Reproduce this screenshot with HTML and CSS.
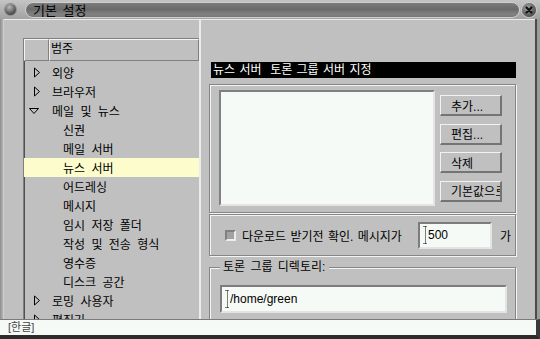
FILE: index.html
```html
<!DOCTYPE html>
<html lang="ko">
<head>
    <meta charset="UTF-8">
    <title>기본 설정</title>
    <link rel="stylesheet" href="styles.css">
</head>
<body>
    <div class="window">
        <div class="titlebar">
            <span class="tb-btn"></span>
            <div class="tb-pill"><span class="tb-title">기본 설정</span></div>
            <span class="tb-close">
                <svg width="14" height="14" viewBox="0 0 14 14">
                    <path d="M4.5 4.5 L9.5 9.5 M9.5 4.5 L4.5 9.5" stroke="#111" stroke-width="2.2" stroke-linecap="round"/>
                </svg>
            </span>
        </div>

        <div class="frame">
            <div class="edge-left"></div>
            <div class="content">
                <div class="tree-col">
                    <div class="tree-head">
                        <div class="th-cell th-blank"></div>
                        <div class="th-cell th-label">범주</div>
                    </div>
                    <ul class="tree">
                        <li><svg class="tri" width="24" height="11" viewBox="0 0 24 11"><path d="M6.5 1 L11.5 5.5 L6.5 10 Z" fill="none" stroke="#000"/></svg>외양</li>
                        <li><svg class="tri" width="24" height="11" viewBox="0 0 24 11"><path d="M6.5 1 L11.5 5.5 L6.5 10 Z" fill="none" stroke="#000"/></svg>브라우저</li>
                        <li><svg class="tri" width="24" height="11" viewBox="0 0 24 11"><path d="M1.5 3.5 L10.5 3.5 L6 8.5 Z" fill="none" stroke="#000"/></svg>메일 및 뉴스</li>
                        <li class="sub">신권</li>
                        <li class="sub">메일 서버</li>
                        <li class="sub selected">뉴스 서버</li>
                        <li class="sub">어드레싱</li>
                        <li class="sub">메시지</li>
                        <li class="sub">임시 저장 폴더</li>
                        <li class="sub">작성 및 전송 형식</li>
                        <li class="sub">영수증</li>
                        <li class="sub">디스크 공간</li>
                        <li><svg class="tri" width="24" height="11" viewBox="0 0 24 11"><path d="M6.5 1 L11.5 5.5 L6.5 10 Z" fill="none" stroke="#000"/></svg>로밍 사용자</li>
                        <li><svg class="tri" width="24" height="11" viewBox="0 0 24 11"><path d="M6.5 1 L11.5 5.5 L6.5 10 Z" fill="none" stroke="#000"/></svg>편집기</li>
                    </ul>
                </div>
                <div class="splitter"></div>
                <div class="panel">
                    <div class="panel-title">뉴스 서버  토론 그룹 서버 지정</div>

                    <div class="group servers">
                        <div class="listbox"></div>
                        <div class="btns">
                            <button>추가...</button>
                            <button>편집...</button>
                            <button>삭제</button>
                            <button>기본값으로</button>
                        </div>
                    </div>

                    <div class="group confirm">
                        <span class="check"></span>
                        <label class="check-label">다운로드 받기전 확인. 메시지가</label>
                        <div class="entry small">
                            <svg class="caret" width="5" height="20" viewBox="0 0 5 20"><path d="M0.5 1.5 H4.5 M2.5 1.5 V18.5 M0.5 18.5 H4.5" stroke="#000" stroke-dasharray="1 1"/></svg>500
                        </div>
                        <span class="unit">가</span>
                    </div>

                    <fieldset class="group dirs">
                        <legend>토론 그룹 디렉토리:</legend>
                        <div class="entry wide">
                            <svg class="caret" width="5" height="20" viewBox="0 0 5 20"><path d="M0.5 1.5 H4.5 M2.5 1.5 V18.5 M0.5 18.5 H4.5" stroke="#000" stroke-dasharray="1 1"/></svg>/home/green
                        </div>
                    </fieldset>
                </div>
            </div>
            <div class="edge-right"></div>
        </div>

        <div class="statusbar"><span class="ime">[한글]</span></div>
    </div>
</body>
</html>
```

FILE: styles.css
```css
body {
    margin: 0;
    background: #c0c0c0;
    font-family: "Liberation Sans", "Noto Sans CJK KR", sans-serif;
    font-size: 12px;
    color: #000;
}

.window {
    width: 540px;
    height: 339px;
    display: flex;
    flex-direction: column;
    overflow: hidden;
}

/* title bar */
.titlebar {
    height: 19px;
    flex: none;
    display: flex;
    align-items: center;
    padding: 0 4px 0 5px;
    box-sizing: border-box;
    background: linear-gradient(#c4c4c4, #a2a2a2);
}

.tb-btn {
    width: 11px;
    height: 11px;
    border-radius: 50%;
    background: radial-gradient(circle at 40% 30%, #b8b8b8, #4a4a4a 70%);
    box-shadow: 0 0 0 1px #8c8c8c;
}

.tb-pill {
    flex: 1;
    height: 14px;
    margin: 0 2px 0 9px;
    border: 1px solid #d0d0d0;
    border-radius: 8px;
    background: linear-gradient(#7c7c7c, #6a6a6a 45%, #828282 80%, #767676);
    display: flex;
    align-items: center;
    padding-left: 7px;
}

.tb-title {
    font-size: 13px;
    color: #000;
    word-spacing: 2px;
}

.tb-close {
    width: 14px;
    height: 14px;
    border-radius: 50%;
    background: radial-gradient(circle at 40% 35%, #a4a4a4, #4c4c4c 75%);
    box-shadow: 0 0 0 1px #c8c8c8;
}

.tb-close svg {
    display: block;
}

/* window body */
.frame {
    height: 300px;
    flex: none;
    display: flex;
}

.edge-left {
    width: 4px;
    background: linear-gradient(90deg, #8e8e8e, #acacac 60%, #dcdcdc);
}

.edge-right {
    width: 3px;
    border-left: 2px solid #4a4a4a;
    background: #9c9c9c;
}

.content {
    flex: 1;
    display: flex;
    border-top: 1px solid #ececec;
    background: #c0c0c0;
    overflow: hidden;
}

/* category tree */
.tree-col {
    width: 176px;
    flex: none;
    padding: 18px 0 0 19px;
}

.tree-head {
    display: flex;
    height: 23px;
    box-sizing: border-box;
    border-top: 1px solid #808080;
    border-left: 1px solid #808080;
}

.th-cell {
    box-sizing: border-box;
    border-style: solid;
    border-width: 1px;
    border-color: #f4f4f4 #808080 #808080 #f4f4f4;
    line-height: 19px;
}

.th-blank {
    width: 25px;
}

.th-label {
    flex: 1;
    padding-left: 1px;
}

.tree {
    list-style: none;
    margin: 0;
    padding: 2px 0 0;
    height: 300px;
    border-left: 1px solid #808080;
    box-shadow: inset 1px 0 0 #505050;
}

.tree li {
    height: 19px;
    display: flex;
    align-items: center;
    padding-left: 4px;
    white-space: nowrap;
    word-spacing: 3px;
}

.tree li.sub {
    padding-left: 39px;
}

.tree li.selected {
    background: #fcfccc;
}

.tri {
    flex: none;
}

.splitter {
    width: 2px;
    flex: none;
    background: #ececec;
}

/* right panel */
.panel {
    width: 307px;
    flex: none;
    margin-left: 8px;
    padding-top: 42px;
}

.panel-title {
    margin-left: 2px;
    height: 16px;
    line-height: 16px;
    padding-left: 2px;
    background: #000;
    color: #fff;
    font-size: 12px;
    white-space: pre;
    word-spacing: 1px;
}

.group {
    box-sizing: border-box;
    border: 1px solid #868686;
    box-shadow: inset 1px 1px 0 #f4f4f4, 1px 1px 0 #f4f4f4;
}

.servers {
    margin-top: 6px;
    height: 129px;
    display: flex;
    padding: 5px 0 0 9px;
}

.listbox {
    width: 216px;
    height: 116px;
    box-sizing: border-box;
    border: 2px solid;
    border-color: #808080 #e4e4e4 #e4e4e4 #808080;
    background: #f6faf6;
}

.btns {
    display: flex;
    flex-direction: column;
    gap: 7.5px;
    margin-left: 5px;
    padding-top: 5px;
}

button {
    width: 62px;
    height: 21px;
    box-sizing: border-box;
    padding: 0 0 0 10px;
    font: inherit;
    color: #000;
    text-align: left;
    white-space: nowrap;
    overflow: hidden;
    border-style: solid;
    border-width: 1px 2px 2px 1px;
    border-color: #f2f2f2 #747474 #747474 #f2f2f2;
    background: #c0c0c0;
}

.confirm {
    margin-top: 1px;
    height: 42px;
    display: flex;
    align-items: center;
    padding-left: 15px;
}

.check {
    width: 11px;
    height: 11px;
    flex: none;
    box-sizing: border-box;
    border: 2px solid;
    border-color: #808080 #ececec #ececec #808080;
    background: #a2a2a2;
}

.check-label {
    width: 170px;
    flex: none;
    margin-left: 6px;
    white-space: nowrap;
    word-spacing: 1px;
}

.entry {
    display: flex;
    align-items: center;
    box-sizing: border-box;
    padding-left: 3px;
    border: 2px solid;
    border-color: #7c7c7c #e4e4e4 #e4e4e4 #7c7c7c;
    background: #f6faf6;
}

.entry.small {
    width: 74px;
    height: 27px;
    margin-left: 6px;
}

.entry.wide {
    width: 287px;
    height: 28px;
}

.caret {
    flex: none;
}

.unit {
    margin-left: 8px;
}

.dirs {
    margin: 4px 0 0;
    padding: 11px 7px 0 10px;
    min-width: 0;
    width: 307px;
    height: 90px;
}

.dirs legend {
    padding: 0 4px 0 3px;
    line-height: 14px;
    background: #c0c0c0;
    word-spacing: 2px;
}

/* status bar */
.statusbar {
    height: 20px;
    flex: none;
    box-sizing: border-box;
    border-top: 1px solid #7a7a7a;
    border-bottom: 4px solid #2c2c2c;
    border-right: 4px solid #3a3a3a;
    background: #f6faf6;
    padding-left: 8px;
    line-height: 15px;
}

.ime {
    font-size: 11px;
    color: #444;
}
```
